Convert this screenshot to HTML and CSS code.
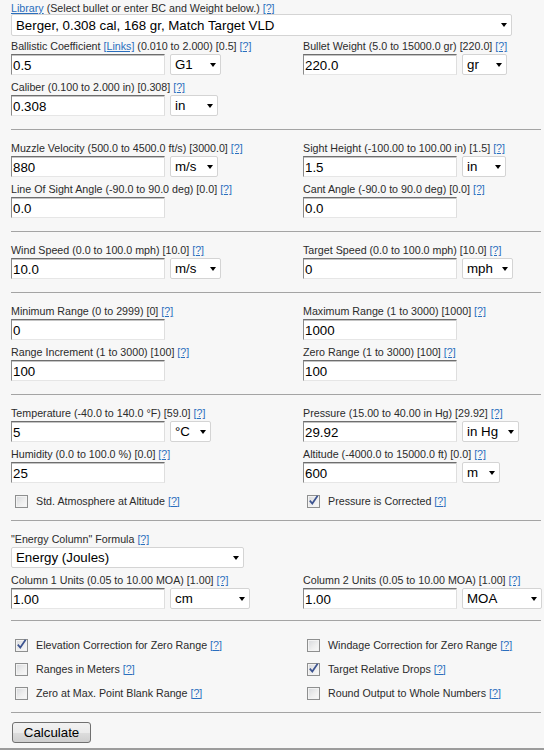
FILE: index.html
```html
<!DOCTYPE html>
<html>
<head>
<meta charset="utf-8">
<link rel="stylesheet" href="styles.css">
</head>
<body>
<div class="page">
  <section class="sec sec-top">
    <div class="field full lib">
      <div class="lbl"><a href="#">Library</a> (Select bullet or enter BC and Weight below.) <a href="#">[?]</a></div>
      <span class="sel w-lib"><select><option>Berger, 0.308 cal, 168 gr, Match Target VLD</option></select></span>
    </div>
    <div class="field">
      <div class="lbl">Ballistic Coefficient <a href="#">[Links]</a> (0.010 to 2.000) [0.5] <a href="#">[?]</a></div>
      <div class="ctl"><input class="inp" type="text" value="0.5"><span class="sel w-g1"><select><option>G1</option></select></span></div>
    </div>
    <div class="field">
      <div class="lbl">Bullet Weight (5.0 to 15000.0 gr) [220.0] <a href="#">[?]</a></div>
      <div class="ctl"><input class="inp" type="text" value="220.0"><span class="sel w-gr"><select><option>gr</option></select></span></div>
    </div>
    <div class="field">
      <div class="lbl">Caliber (0.100 to 2.000 in) [0.308] <a href="#">[?]</a></div>
      <div class="ctl"><input class="inp" type="text" value="0.308"><span class="sel w-in"><select><option>in</option></select></span></div>
    </div>
  </section>

  <section class="sec">
    <div class="field">
      <div class="lbl">Muzzle Velocity (500.0 to 4500.0 ft/s) [3000.0] <a href="#">[?]</a></div>
      <div class="ctl"><input class="inp" type="text" value="880"><span class="sel w-ms"><select><option>m/s</option></select></span></div>
    </div>
    <div class="field">
      <div class="lbl">Sight Height (-100.00 to 100.00 in) [1.5] <a href="#">[?]</a></div>
      <div class="ctl"><input class="inp" type="text" value="1.5"><span class="sel w-in2"><select><option>in</option></select></span></div>
    </div>
    <div class="field">
      <div class="lbl">Line Of Sight Angle (-90.0 to 90.0 deg) [0.0] <a href="#">[?]</a></div>
      <div class="ctl"><input class="inp" type="text" value="0.0"></div>
    </div>
    <div class="field">
      <div class="lbl">Cant Angle (-90.0 to 90.0 deg) [0.0] <a href="#">[?]</a></div>
      <div class="ctl"><input class="inp" type="text" value="0.0"></div>
    </div>
  </section>

  <section class="sec">
    <div class="field">
      <div class="lbl">Wind Speed (0.0 to 100.0 mph) [10.0] <a href="#">[?]</a></div>
      <div class="ctl"><input class="inp" type="text" value="10.0"><span class="sel w-ms2"><select><option>m/s</option></select></span></div>
    </div>
    <div class="field">
      <div class="lbl">Target Speed (0.0 to 100.0 mph) [10.0] <a href="#">[?]</a></div>
      <div class="ctl"><input class="inp" type="text" value="0"><span class="sel w-mph"><select><option>mph</option></select></span></div>
    </div>
  </section>

  <section class="sec">
    <div class="field">
      <div class="lbl">Minimum Range (0 to 2999) [0] <a href="#">[?]</a></div>
      <div class="ctl"><input class="inp" type="text" value="0"></div>
    </div>
    <div class="field">
      <div class="lbl">Maximum Range (1 to 3000) [1000] <a href="#">[?]</a></div>
      <div class="ctl"><input class="inp" type="text" value="1000"></div>
    </div>
    <div class="field">
      <div class="lbl">Range Increment (1 to 3000) [100] <a href="#">[?]</a></div>
      <div class="ctl"><input class="inp" type="text" value="100"></div>
    </div>
    <div class="field">
      <div class="lbl">Zero Range (1 to 3000) [100] <a href="#">[?]</a></div>
      <div class="ctl"><input class="inp" type="text" value="100"></div>
    </div>
  </section>

  <section class="sec">
    <div class="field">
      <div class="lbl">Temperature (-40.0 to 140.0 °F) [59.0] <a href="#">[?]</a></div>
      <div class="ctl"><input class="inp" type="text" value="5"><span class="sel w-c"><select><option>°C</option></select></span></div>
    </div>
    <div class="field">
      <div class="lbl">Pressure (15.00 to 40.00 in Hg) [29.92] <a href="#">[?]</a></div>
      <div class="ctl"><input class="inp" type="text" value="29.92"><span class="sel w-hg"><select><option>in Hg</option></select></span></div>
    </div>
    <div class="field">
      <div class="lbl">Humidity (0.0 to 100.0 %) [0.0] <a href="#">[?]</a></div>
      <div class="ctl"><input class="inp" type="text" value="25"></div>
    </div>
    <div class="field">
      <div class="lbl">Altitude (-4000.0 to 15000.0 ft) [0.0] <a href="#">[?]</a></div>
      <div class="ctl"><input class="inp" type="text" value="600"><span class="sel w-m"><select><option>m</option></select></span></div>
    </div>
    <div class="chk chk-atm"><span class="cb"></span><span class="ct">Std. Atmosphere at Altitude <a href="#">[?]</a></span></div>
    <div class="chk chk-atm"><span class="cb"><svg viewBox="0 0 11 11" width="11" height="11"><path d="M1.8 5.6 L4.3 8.6 L9.6 0.8" fill="none" stroke="#3d5490" stroke-width="1.7"/></svg></span><span class="ct">Pressure is Corrected <a href="#">[?]</a></span></div>
  </section>

  <section class="sec sec-energy">
    <div class="field">
      <div class="lbl">"Energy Column" Formula <a href="#">[?]</a></div>
      <div class="ctl"><span class="sel w-energy"><select><option>Energy (Joules)</option></select></span></div>
    </div>
    <div class="field"></div>
    <div class="field">
      <div class="lbl">Column 1 Units (0.05 to 10.00 MOA) [1.00] <a href="#">[?]</a></div>
      <div class="ctl"><input class="inp" type="text" value="1.00"><span class="sel w-cm"><select><option>cm</option></select></span></div>
    </div>
    <div class="field">
      <div class="lbl">Column 2 Units (0.05 to 10.00 MOA) [1.00] <a href="#">[?]</a></div>
      <div class="ctl"><input class="inp" type="text" value="1.00"><span class="sel w-moa"><select><option>MOA</option></select></span></div>
    </div>
  </section>

  <section class="sec sec-checks">
    <div class="chk"><span class="cb"><svg viewBox="0 0 11 11" width="11" height="11"><path d="M1.8 5.6 L4.3 8.6 L9.6 0.8" fill="none" stroke="#3d5490" stroke-width="1.7"/></svg></span><span class="ct">Elevation Correction for Zero Range <a href="#">[?]</a></span></div>
    <div class="chk"><span class="cb"></span><span class="ct">Windage Correction for Zero Range <a href="#">[?]</a></span></div>
    <div class="chk"><span class="cb"></span><span class="ct">Ranges in Meters <a href="#">[?]</a></span></div>
    <div class="chk"><span class="cb"><svg viewBox="0 0 11 11" width="11" height="11"><path d="M1.8 5.6 L4.3 8.6 L9.6 0.8" fill="none" stroke="#3d5490" stroke-width="1.7"/></svg></span><span class="ct">Target Relative Drops <a href="#">[?]</a></span></div>
    <div class="chk"><span class="cb"></span><span class="ct">Zero at Max. Point Blank Range <a href="#">[?]</a></span></div>
    <div class="chk"><span class="cb"></span><span class="ct">Round Output to Whole Numbers <a href="#">[?]</a></span></div>
  </section>

  <section class="sec-btn">
    <button class="btn" type="button">Calculate</button>
  </section>
</div>
<div class="bottom-bar"></div>
</body>
</html>
```

FILE: styles.css
```css
html, body {
  margin: 0;
  padding: 0;
  background: #f7f7f7;
  font-family: "Liberation Sans", Arial, sans-serif;
  color: #2b2b2b;
}

a {
  color: #2a6ebd;
  text-decoration: underline;
}

.page {
  width: 530px;
  margin-left: 11px;
}

.sec {
  display: grid;
  grid-template-columns: 292px 1fr;
  padding: 12px 0 7px;
  border-top: 1px solid #a4a4a4;
}

.sec-top {
  padding-top: 2px;
  border-top: none;
}

.sec-energy {
  padding-bottom: 5px;
}

.full {
  grid-column: 1 / -1;
}

.field {
  margin-bottom: 6px;
}

.lib {
  margin-bottom: 4px;
}

.lbl {
  font-size: 10.7px;
  line-height: 13px;
  height: 13px;
  margin-bottom: 1px;
  white-space: nowrap;
}

.lib .lbl {
  line-height: 12px;
  height: 12px;
  margin-bottom: 0;
}

.ctl {
  display: flex;
  gap: 5px;
  height: 21px;
}

.inp {
  box-sizing: border-box;
  width: 154px;
  height: 21px;
  margin: 0;
  padding: 1px 1px 0;
  border: 1px solid;
  border-color: #6e6e6e #dedede #e6e6e6 #8a8a8a;
  box-shadow: inset 0 1px 0 #c4c4c4;
  background: #fff;
  font: 13.3px "Liberation Sans", Arial, sans-serif;
  color: #000;
  outline: none;
}

.sel {
  position: relative;
  display: inline-block;
  height: 21px;
}

.sel select {
  appearance: none;
  -webkit-appearance: none;
  box-sizing: border-box;
  width: 100%;
  height: 100%;
  margin: 0;
  padding: 0 0 0 4px;
  border: 1px solid #d4d4d4;
  border-radius: 2px;
  background: #fff;
  font: 13.3px "Liberation Sans", Arial, sans-serif;
  color: #000;
  outline: none;
}

.sel::after {
  content: "";
  position: absolute;
  right: 5px;
  top: 50%;
  margin-top: -2px;
  border-left: 3.5px solid transparent;
  border-right: 3.5px solid transparent;
  border-top: 4px solid #000;
  pointer-events: none;
}

.w-lib { width: 501px; height: 22px; }
.w-g1 { width: 51px; }
.w-gr { width: 45px; }
.w-in { width: 48px; }
.w-ms { width: 48px; }
.w-in2 { width: 44px; }
.w-ms2 { width: 51px; }
.w-mph { width: 51px; }
.w-c { width: 41px; }
.w-hg { width: 57px; }
.w-m { width: 38px; }
.w-energy { width: 233px; }
.w-cm { width: 80px; }
.w-moa { width: 80px; }

.chk {
  display: flex;
  align-items: center;
  height: 24px;
}

.sec-checks {
  padding-top: 12px;
}

.cb {
  box-sizing: border-box;
  position: relative;
  width: 13px;
  height: 13px;
  margin: 0 8px 0 4px;
  flex: none;
  border: 1px solid #8e8f8f;
  background: linear-gradient(135deg, #d6d8dc 0%, #eeeeee 55%, #fafafa 100%);
  box-shadow: inset 0 0 0 1px #f3f3f3;
}

.cb svg {
  position: absolute;
  left: 0;
  top: -1px;
}

.ct {
  font-size: 10.7px;
  line-height: 13px;
  white-space: nowrap;
}

.sec-btn {
  border-top: 1px solid #a4a4a4;
  padding: 9px 0 5px 1px;
}

.btn {
  box-sizing: border-box;
  display: block;
  width: 79px;
  height: 21px;
  margin: 0;
  padding: 0;
  border: 1px solid #707070;
  border-radius: 3px;
  background: linear-gradient(#f2f2f2 0%, #ebebeb 50%, #dddddd 51%, #cfcfcf 100%);
  font: 13.3px "Liberation Sans", Arial, sans-serif;
  color: #000;
}

.bottom-bar {
  height: 2px;
  background: #9c9c9c;
}
```
